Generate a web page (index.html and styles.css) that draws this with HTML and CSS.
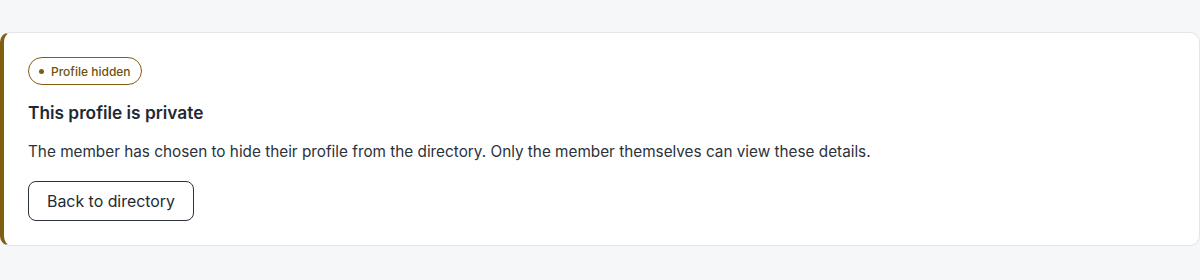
FILE: index.html
```html
<!DOCTYPE html>
<html lang="en">
<head>
<meta charset="utf-8">
<title>Profile hidden</title>
<link rel="stylesheet" href="styles.css">
</head>
<body>
<main class="page">
  <section class="card">
    <span class="badge"><span class="dot"></span>Profile hidden</span>
    <h1 class="title">This profile is private</h1>
    <p class="text">The member has chosen to hide their profile from the directory. Only the member themselves can view these details.</p>
    <div><a class="btn" href="#">Back to directory</a></div>
  </section>
</main>
</body>
</html>
```
FILE: styles.css
```css
* { box-sizing: border-box; }
html, body { margin: 0; padding: 0; }
body {
  background: #f6f7f9;
  font-family: Inter, "Noto Sans", sans-serif;
  color: #1f2933;
}
.page { padding: 32px 0; }
.card {
  background: #fff;
  border: 1px solid #e3e5e8;
  border-left: 4px solid #7f5e12;
  border-radius: 10px;
  padding: 24px;
  display: flex;
  flex-direction: column;
  align-items: flex-start;
}
.badge {
  display: inline-flex;
  align-items: center;
  gap: 7px;
  height: 28px;
  padding: 0 10px;
  border: 1px solid #7f5e12;
  border-radius: 999px;
  color: #6f520f;
  font-size: 12px;
  font-weight: 500;
}
.dot { width: 5px; height: 5px; border-radius: 50%; background: #7f5e12; }
.title {
  margin: 17px 0 0;
  font-size: 17.3px;
  line-height: 22px;
  font-weight: 600;
  color: #1f2933;
}
.text {
  margin: 16px 0 0;
  font-size: 15.3px;
  line-height: 24px;
  color: #2b323b;
}
.btn {
  display: inline-flex;
  align-items: center;
  margin-top: 17px;
  height: 40px;
  padding: 0 18px;
  border: 1px solid #2b323b;
  border-radius: 8px;
  color: #1f2933;
  font-size: 15.9px;
  text-decoration: none;
  font-weight: 400;
}
```
